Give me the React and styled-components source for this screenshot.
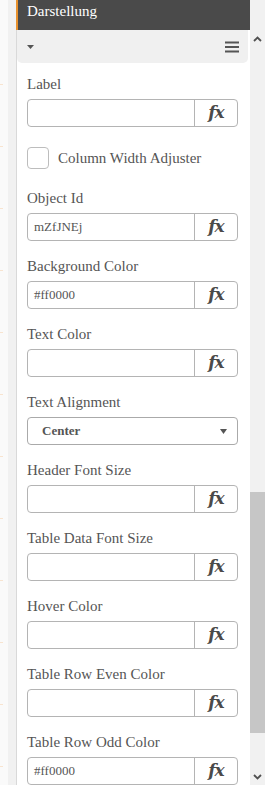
import React from "react";
import styled, { createGlobalStyle } from "styled-components";

const serif = `"Liberation Serif", "Times New Roman", serif`;

const GlobalStyle = createGlobalStyle`
  html, body {
    margin: 0;
    padding: 0;
    height: 785px;
    overflow: hidden;
    background: #ffffff;
    font-family: ${serif};
  }
  * {
    box-sizing: border-box;
  }
`;

const Page = styled.div`
  display: grid;
  grid-template-columns: 8px 8px 1px 233px 15px;
  height: 785px;
  font-family: ${serif};
  color: #555555;
`;

const Gutter = styled.div`
  background: #fafafa;
  display: flex;
  flex-direction: column;
  padding-top: 84px;
  gap: 61px;
`;

const Tick = styled.span`
  display: block;
  flex-shrink: 0;
  width: 3px;
  height: 1px;
  background: #f8e4d0;
`;

const Shade = styled.div`
  background: #f1f1f1;
`;

const Rule = styled.div`
  background: #d9d9d9;
  display: flex;
  flex-direction: column;
`;

const RuleAccent = styled.div`
  height: 30px;
  background: #e8912d;
`;

const Panel = styled.div`
  display: flex;
  flex-direction: column;
  background: #ffffff;
  overflow: hidden;
  & > * {
    flex-shrink: 0;
  }
`;

const Header = styled.div`
  height: 30px;
  background: #4a4a4a;
  color: #ffffff;
  font-family: ${serif};
  font-size: 15px;
  line-height: 18px;
  padding: 2px 0 0 9px;
  border-left: 1px solid #e8912d;
`;

const Toolbar = styled.div`
  height: 33px;
  margin-right: 2px;
  background: #f0f0f0;
  border-radius: 0 0 5px 5px;
  display: flex;
  align-items: center;
  justify-content: space-between;
  padding: 0 9px 0 10px;
`;

const Form = styled.div`
  display: flex;
  flex-direction: column;
  padding: 12px 12px 0 10px;
  & > * {
    flex-shrink: 0;
  }
`;

const Field = styled.div`
  display: flex;
  flex-direction: column;
  margin-bottom: 16px;
`;

const Label = styled.div`
  font-family: ${serif};
  font-size: 15px;
  line-height: 18px;
  margin-bottom: 6px;
  color: #555555;
`;

const InputGroup = styled.div`
  display: flex;
  height: 28px;
  border: 1px solid #b4b4b4;
  border-radius: 4px;
  overflow: hidden;
`;

const TextInput = styled.div`
  flex: 1;
  padding-left: 6px;
  font-family: ${serif};
  font-size: 13px;
  line-height: 26px;
  color: #555555;
`;

const FxButton = styled.div`
  width: 43px;
  border-left: 1px solid #b4b4b4;
  display: flex;
  align-items: center;
  justify-content: center;
  font-family: "DejaVu Serif", "Liberation Serif", serif;
  font-size: 17px;
  font-weight: bold;
  font-style: italic;
  letter-spacing: -1px;
  color: #4a4a4a;
  padding-bottom: 2px;
`;

const CheckRow = styled.label`
  display: flex;
  align-items: center;
  gap: 9px;
  margin: 4px 0 20px;
  font-family: ${serif};
  font-size: 15px;
  line-height: 22px;
`;

const CheckBox = styled.span`
  width: 22px;
  height: 22px;
  border: 1px solid #bdbdbd;
  border-radius: 4px;
  background: #ffffff;
`;

const Select = styled.div`
  height: 28px;
  border: 1px solid #aaaaaa;
  border-radius: 4px;
  display: flex;
  align-items: center;
  justify-content: space-between;
  padding: 0 10px 0 14px;
  font-family: ${serif};
  font-size: 13px;
  font-weight: bold;
  color: #555555;
`;

const Scrollbar = styled.div`
  background: #f1f1f1;
  display: flex;
  flex-direction: column;
  align-items: center;
`;

const ArrowCell = styled.div`
  height: 17px;
  width: 15px;
  flex-shrink: 0;
  display: flex;
  align-items: center;
  justify-content: center;
  margin-top: ${(p) => p.$top || 0}px;
`;

const Thumb = styled.div`
  width: 15px;
  height: 241px;
  flex-shrink: 0;
  margin-top: 445px;
  background: #c6c6c6;
`;

const Spacer = styled.div`
  flex: 1;
`;

const Triangle = ({ w = 7, h = 4 }) => (
  <svg width={w} height={h} viewBox={`0 0 ${w} ${h}`}>
    <polygon points={`0,0 ${w},0 ${w / 2},${h}`} fill="#555" />
  </svg>
);

const Hamburger = () => (
  <svg width="14" height="12" viewBox="0 0 14 12">
    <rect x="0" y="0.5" width="14" height="2" fill="#555" />
    <rect x="0" y="5" width="14" height="2" fill="#555" />
    <rect x="0" y="9.5" width="14" height="2" fill="#555" />
  </svg>
);

const Chevron = ({ up }) => (
  <svg width="9" height="6" viewBox="0 0 9 6">
    <polyline
      points={up ? "1,5 4.5,1.5 8,5" : "1,1 4.5,4.5 8,1"}
      fill="none"
      stroke="#505050"
      strokeWidth="1.8"
    />
  </svg>
);

const FxField = ({ label, value }) => (
  <Field>
    <Label>{label}</Label>
    <InputGroup>
      <TextInput>{value}</TextInput>
      <FxButton>fx</FxButton>
    </InputGroup>
  </Field>
);

const fieldsTop = [["Object Id", "mZfJNEj"], ["Background Color", "#ff0000"], ["Text Color", ""]];
const fieldsBottom = [
  ["Header Font Size", ""],
  ["Table Data Font Size", ""],
  ["Hover Color", ""],
  ["Table Row Even Color", ""],
  ["Table Row Odd Color", "#ff0000"],
];

export default function App() {
  return (
    <Page>
      <GlobalStyle />
      <Gutter>
        {Array.from({ length: 12 }).map((_, i) => (
          <Tick key={i} />
        ))}
      </Gutter>
      <Shade />
      <Rule>
        <RuleAccent />
      </Rule>
      <Panel>
        <Header>Darstellung</Header>
        <Toolbar>
          <Triangle />
          <Hamburger />
        </Toolbar>
        <Form>
          <FxField label="Label" value="" />
          <CheckRow>
            <CheckBox />
            Column Width Adjuster
          </CheckRow>
          {fieldsTop.map(([l, v]) => (
            <FxField key={l} label={l} value={v} />
          ))}
          <Field>
            <Label>Text Alignment</Label>
            <Select>
              Center
              <Triangle w={7} h={5} />
            </Select>
          </Field>
          {fieldsBottom.map(([l, v]) => (
            <FxField key={l} label={l} value={v} />
          ))}
        </Form>
      </Panel>
      <Scrollbar>
        <ArrowCell $top={30}>
          <Chevron up />
        </ArrowCell>
        <Thumb />
        <Spacer />
        <ArrowCell>
          <Chevron />
        </ArrowCell>
      </Scrollbar>
    </Page>
  );
}
